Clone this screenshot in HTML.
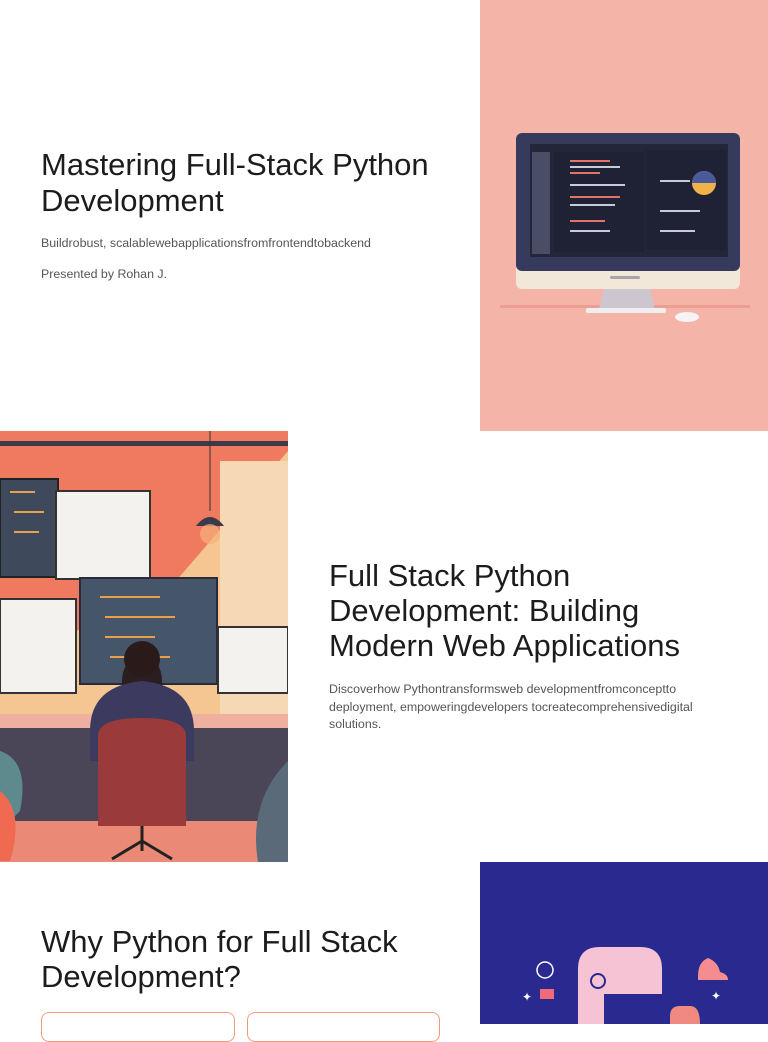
<!DOCTYPE html>
<html><head><meta charset="utf-8"><style>
*{margin:0;padding:0;box-sizing:border-box}
body{width:768px;height:1024px;overflow:hidden;background:#fff;font-family:"Liberation Sans",sans-serif;color:#1a1a1a;position:relative}
.a{position:absolute}
h1{font-weight:400;font-size:31px;line-height:36px;color:#1c1c1c}
p{font-size:12.4px;color:#555;line-height:17.5px}
</style></head><body>

<div class="a" style="left:41px;top:147px;width:430px"><h1>Mastering Full-Stack Python Development</h1></div>
<p class="a" style="left:41px;top:235px">Buildrobust, scalablewebapplicationsfromfrontendtobackend</p>
<p class="a" style="left:41px;top:266px">Presented by Rohan J.</p>

<svg class="a" style="left:480px;top:0" width="288" height="431" viewBox="0 0 288 431">
<rect width="288" height="431" fill="#f4b4a8"/>
<rect x="20" y="305" width="250" height="3" fill="#ec9e92"/>
<rect x="36" y="133" width="224" height="156" rx="6" fill="#f2e8da"/>
<rect x="36" y="133" width="224" height="138" rx="6" fill="#363a5c"/>
<rect x="50" y="144" width="198" height="113" fill="#222638"/>
<rect x="52" y="152" width="18" height="102" fill="#4a4d66"/>
<rect x="74" y="152" width="90" height="100" fill="#1e2234"/>
<rect x="166" y="150" width="80" height="100" fill="#1e2234"/>
<g fill="#e0736a"><rect x="90" y="160" width="40" height="2"/><rect x="90" y="172" width="30" height="2"/><rect x="90" y="196" width="50" height="2"/><rect x="90" y="220" width="35" height="2"/></g>
<g fill="#c9c9d9"><rect x="90" y="166" width="50" height="2"/><rect x="90" y="184" width="55" height="2"/><rect x="90" y="204" width="45" height="2"/><rect x="90" y="230" width="40" height="2"/><rect x="180" y="180" width="30" height="2"/><rect x="180" y="210" width="40" height="2"/><rect x="180" y="230" width="35" height="2"/></g>
<circle cx="224" cy="183" r="12" fill="#f0b34a"/><path d="M212 183a12 12 0 0 1 24 0z" fill="#4a5a9a"/>
<rect x="130" y="276" width="30" height="3" rx="1.5" fill="#a7a4aa"/>
<path d="M124 289h46l5 20h-56z" fill="#cdc6cf"/>
<rect x="106" y="308" width="80" height="5" rx="2" fill="#f0eeee"/>
<ellipse cx="207" cy="317" rx="12" ry="5" fill="#f5f3f3"/>
</svg>

<svg class="a" style="left:0;top:431px" width="288" height="431" viewBox="0 0 288 431">
<rect width="288" height="431" fill="#f5c592"/>
<path d="M0 0h288v20L150 180 0 220z" fill="#ef7a60"/>
<rect x="220" y="30" width="68" height="260" fill="#f6d8b4"/>
<rect y="10" width="288" height="5" fill="#3d3a4a"/>
<line x1="210" y1="0" x2="210" y2="80" stroke="#333" stroke-width="1"/>
<path d="M196 95q14-18 28 0z" fill="#3a3a4a"/><circle cx="210" cy="103" r="10" fill="#f6b07a" opacity=".7"/>
<rect x="0" y="48" width="58" height="98" fill="#3e4a5c" stroke="#222" stroke-width="2"/>
<rect x="56" y="60" width="94" height="88" fill="#f4f2ef" stroke="#333" stroke-width="2"/>
<rect x="0" y="168" width="76" height="94" fill="#f4f2ef" stroke="#333" stroke-width="2"/>
<rect x="80" y="147" width="137" height="106" fill="#46566a" stroke="#2a2a38" stroke-width="2"/>
<rect x="218" y="196" width="70" height="66" fill="#f4f2ef" stroke="#333" stroke-width="2"/>
<g fill="#e8a04a"><rect x="10" y="60" width="25" height="2"/><rect x="14" y="80" width="30" height="2"/><rect x="14" y="100" width="25" height="2"/><rect x="100" y="165" width="60" height="2"/><rect x="105" y="185" width="70" height="2"/><rect x="105" y="205" width="50" height="2"/><rect x="110" y="225" width="60" height="2"/></g>
<rect x="0" y="283" width="288" height="14" fill="#efb0a0"/>
<rect x="0" y="297" width="288" height="100" fill="#4a4658"/>
<rect x="0" y="390" width="288" height="41" fill="#ea8a76"/>
<path d="M122 250q0-20 20-30 20 10 20 30v15h-40z" fill="#2a1e20"/>
<circle cx="142" cy="228" r="18" fill="#2a1a1a"/>
<path d="M90 300q0-45 52-50 52 5 52 50v30H90z" fill="#3c3a5e"/>
<path d="M98 305q0-18 44-18 44 0 44 18v90H98z" fill="#9a3a3a"/>
<path d="M142 395v25M142 410l-30 18M142 410l30 18" stroke="#222" stroke-width="3"/>
<path d="M0 320q30 10 20 60L0 400z" fill="#5e8a8e"/><path d="M0 360q25 20 10 70H0z" fill="#ef6a50"/>
<path d="M288 330q-40 40-30 101h30z" fill="#5a6a78"/>
</svg>

<div class="a" style="left:329px;top:558px;width:365px"><h1 style="line-height:35px">Full Stack Python Development: Building Modern Web Applications</h1></div>
<p class="a" style="left:329px;top:681px;width:375px">Discoverhow Pythontransformsweb developmentfromconceptto deployment, empoweringdevelopers tocreatecomprehensivedigital solutions.</p>

<div class="a" style="left:41px;top:924px;width:430px"><h1 style="line-height:35px">Why Python for Full Stack Development?</h1></div>
<div class="a" style="left:41px;top:1012px;width:194px;height:30px;border:1.5px solid #f39a7e;border-radius:8px"></div>
<div class="a" style="left:247px;top:1012px;width:193px;height:30px;border:1.5px solid #f39a7e;border-radius:8px"></div>

<svg class="a" style="left:480px;top:862px" width="288" height="162" viewBox="0 0 288 162">
<rect width="288" height="162" fill="#29298f"/>
<path d="M98 162v-55q0-22 22-22h40q22 0 22 22v25h-58v30z" fill="#f6c3d4"/>
<circle cx="118" cy="119" r="7" fill="#f6c3d4" stroke="#29298f" stroke-width="2"/>
<path d="M190 162v-8q0-10 10-10h10q10 0 10 18z" fill="#f08a80"/>
<path d="M218 114q0-14 10-18 10 4 12 14 8 2 8 8h-30z" fill="#f48c90"/>
<circle cx="65" cy="108" r="8" fill="none" stroke="#fff" stroke-width="1.5"/>
<rect x="60" y="127" width="14" height="10" fill="#f06a7a"/>
<text x="42" y="139" fill="#fff" font-size="12">✦</text><text x="231" y="138" fill="#fff" font-size="12">✦</text>
</svg>
</body></html>
